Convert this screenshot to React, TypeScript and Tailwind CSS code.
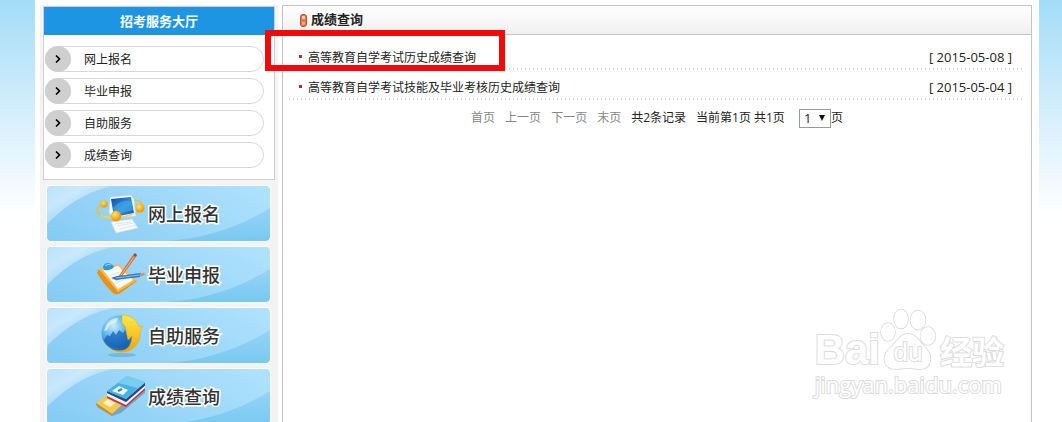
import React from 'react';

const services = ['网上报名', '毕业申报', '自助服务', '成绩查询'];

const records = [
  { title: '高等教育自学考试历史成绩查询', date: '2015-05-08' },
  { title: '高等教育自学考试技能及毕业考核历史成绩查询', date: '2015-05-04' },
];

function ComputerIcon() {
  return (
    <svg viewBox="0 0 50 44" className="h-11 w-[50px]" aria-hidden="true">
      <defs>
        <linearGradient id="screen" x1="0" y1="0" x2="1" y2="1">
          <stop offset="0" stopColor="#0b4fa8" />
          <stop offset="0.55" stopColor="#2b8fe0" />
          <stop offset="1" stopColor="#1556ae" />
        </linearGradient>
        <radialGradient id="ball" cx="0.4" cy="0.35" r="0.7">
          <stop offset="0" stopColor="#ffe27a" />
          <stop offset="0.5" stopColor="#fbb81c" />
          <stop offset="1" stopColor="#e88d05" />
        </radialGradient>
      </defs>
      <path d="M10 11C1 14 0 20 6 23c8 5 33 3 40-7" fill="none" stroke="#f0bd35" strokeWidth="1.6" />
      <path d="M15 5 36 3l3 4 2 17-23 3-4-7z" fill="#f1f6fb" stroke="#b9cfe2" strokeWidth=".6" />
      <path d="M16 7 36 5l3 16-20 4z" fill="url(#screen)" />
      <path d="M18 16c6-7 12-8 18-7l2 9-18 5z" fill="#4fb1ee" opacity=".5" />
      <path d="M16 30 37 27l6 9-22 5z" fill="#f9fbfd" stroke="#c9d9e6" strokeWidth=".6" />
      <path d="m20 32 16-2m-14 4 17-3m-15 6 17-4" stroke="#cfdbe6" strokeWidth=".7" />
      <path d="M6 23c6 4 20 4 32-1" fill="none" stroke="#f7cf57" strokeWidth="1.6" />
      <path d="M39 8c5 0 8 2 7 6" fill="none" stroke="#f0bd35" strokeWidth="1.6" />
      <circle cx="9" cy="12" r="3.6" fill="url(#ball)" />
      <circle cx="21" cy="24" r="5.2" fill="url(#ball)" />
      <circle cx="45" cy="16" r="4.5" fill="url(#ball)" />
    </svg>
  );
}

function ClipboardIcon() {
  return (
    <svg viewBox="0 0 50 44" className="h-11 w-[50px]" aria-hidden="true">
      <path d="m3 17 20-5c3 5 11 12 19 16L24 41c-3 1-5 0-7-2C11 33 6 27 2 20z" fill="#e8921c" />
      <path d="m4 16 19-5 19 16-19 12z" fill="#f7bc51" />
      <path d="m8 17 15-4 15 14-15 9z" fill="#fff" />
      <path d="m14 23 10-4m-7 8 11-5m-7 8 11-5" stroke="#d7dfe8" strokeWidth="1" />
      <path d="M8 14c1-4 5-5 8-3l3 2c0 3-6 5-10 4z" fill="#2c9bd6" />
      <path d="M10 13c2-2 4-2 6-1" stroke="#9adcf5" fill="none" />
      <path d="M38 2 23 24l-2 4 4-2L41 4z" fill="#d9753d" />
      <path d="m39 4-15 21" stroke="#f3b184" strokeWidth="1" />
      <path d="m38 2 3 2 1-2-2-2z" fill="#a1462a" />
      <path d="m16 25 5 2 24-3 1-4-24 3z" fill="#2d79c6" />
      <path d="m21 25 24-3" stroke="#8cc7ef" />
      <path d="m45 22 4-2m-3 3 4-2" stroke="#e28c52" strokeWidth="1.3" />
    </svg>
  );
}

function GlobeIcon() {
  return (
    <svg viewBox="0 0 50 44" className="h-11 w-[50px]" aria-hidden="true">
      <defs>
        <radialGradient id="globe" cx="0.35" cy="0.3" r="0.8">
          <stop offset="0" stopColor="#c5ecfc" />
          <stop offset="0.45" stopColor="#58b2e8" />
          <stop offset="1" stopColor="#0b4fa8" />
        </radialGradient>
        <linearGradient id="ring" x1="0" y1="0" x2="0" y2="1">
          <stop offset="0" stopColor="#ffe94a" />
          <stop offset="1" stopColor="#f3a407" />
        </linearGradient>
      </defs>
      <ellipse cx="27" cy="41" rx="14" ry="2" fill="#5b9dbf" opacity=".5" />
      <path d="M7 22c3 10 10 16 19 16 10 0 17-6 19-17l-4-9-14 21z" fill="url(#ring)" stroke="#e8a80c" strokeWidth=".5" />
      <circle cx="24" cy="19" r="17.5" fill="url(#globe)" />
      <path d="m9 26 3-5 3 1 3-5 3 4 3-5 4 3 3-4 3 3v11c-3 5-8 6-12 5-6 0-11-3-13-8z" fill="#125cb4" opacity=".7" />
      <path d="M12 10c3-4 7-6 11-6l-2 5-6 2-3 5-3 1z" fill="#e4f7fe" opacity=".75" />
      <path d="M27 1c9 0 15 5 17 12l3-1-2 7c0 11-7 19-19 19 7-2 11-8 11-16l-4 4-3-14-3-3z" fill="url(#ring)" stroke="#e8a80c" strokeWidth=".5" />
    </svg>
  );
}

function DisksIcon() {
  return (
    <svg viewBox="0 0 50 44" className="h-11 w-[50px]" aria-hidden="true">
      <path d="m2 29 12-7 18 9 18-17v4L26 38l-9 3L2 32z" fill="#54606f" opacity=".4" />
      <path d="m1 28 12-9 17 8-13 12z" fill="#f7c84c" />
      <path d="m1 28 16 11v2L1 30z" fill="#cb8f22" />
      <path d="m8 28 5-4 7 4-5 4z" fill="#fff2c4" />
      <path d="m12 20 19 9 20-18v3L31 32l-19-9z" fill="#bf3252" />
      <path d="m12 18 19 9 20-18v3L31 30l-19-9z" fill="#eef3f8" />
      <path d="m12 16 19 8 20-17v3L31 27l-19-9z" fill="#234b82" />
      <path d="m12 16 20-15 18 6-19 17z" fill="#4ab2e3" />
      <path d="m23 8 9-7 18 6-7 6z" fill="#79cdf0" />
      <path d="m17 16 7-5 9 4-5 5z" fill="#eaf8fe" />
      <path d="m23 16 4-2" stroke="#487da8" strokeWidth="2" />
    </svg>
  );
}

const banners = [
  { label: '网上报名', Icon: ComputerIcon },
  { label: '毕业申报', Icon: ClipboardIcon },
  { label: '自助服务', Icon: GlobeIcon },
  { label: '成绩查询', Icon: DisksIcon },
];

function Banner({ label, Icon }: { label: string; Icon: () => React.JSX.Element }) {
  return (
    <a
      href="#"
      className="relative flex h-[55px] shrink-0 items-center overflow-hidden rounded-[4px] bg-linear-to-b from-[#a9dcfb] to-[#79c8f0] pl-12 outline-1 outline-white"
    >
      <svg viewBox="0 0 223 55" preserveAspectRatio="none" className="absolute inset-0 h-full w-full" aria-hidden="true">
        <defs>
          <linearGradient id="sheen" x1="0" y1="0" x2="1" y2="0">
            <stop offset="0" stopColor="#8accf5" />
            <stop offset="1" stopColor="#b4e5fd" />
          </linearGradient>
          <linearGradient id="corner" x1="0" y1="0" x2="1" y2="1">
            <stop offset="0" stopColor="#bfe3fc" />
            <stop offset="0.3" stopColor="#d3edfd" />
            <stop offset="0.8" stopColor="#8bcdf5" />
          </linearGradient>
        </defs>
        <path d="M0 55V38C22 16 42 5 66 0h157v22C190 42 158 52 120 55z" fill="url(#sheen)" opacity=".7" />
        <path d="M0 0h66C42 5 22 16 0 38z" fill="url(#corner)" opacity=".8" />
      </svg>
      <span className="relative flex items-center gap-[3px]">
        <Icon />
        <span className="text-[18px] leading-6 font-medium text-[#333] [paint-order:stroke_fill] [-webkit-text-stroke:3px_#fff]">
          {label}
        </span>
      </span>
    </a>
  );
}

function Sidebar() {
  return (
    <aside className="flex w-[238px] shrink-0 flex-col bg-[#f3f3f3] pr-[3px] pl-[3px] pt-px">
      <nav className="shrink-0 border border-[#d0d0d0] bg-white pb-[11px]" aria-label="招考服务大厅">
        <h2 className="h-7 bg-[#1e95e3] text-center text-[13px] leading-7 font-bold text-white">招考服务大厅</h2>
        <ul className="flex flex-col gap-1.5 pt-[11px] pr-2.5 pl-px">
          {services.map((name) => (
            <li key={name}>
              <a href="#" className="flex h-[26px] items-center rounded-full border border-[#d8d8d8] text-[12px] text-[#222]">
                <span className="-my-px -ml-px flex size-[26px] shrink-0 items-center justify-center rounded-full bg-[#cfcfcf]">
                  <svg viewBox="0 0 8 8" className="size-2" aria-hidden="true">
                    <path d="m2 .5 3.5 3.5L2 7.5" fill="none" stroke="#000" strokeWidth="1.6" />
                  </svg>
                </span>
                <span className="pt-0.5 pl-[13px]">{name}</span>
              </a>
            </li>
          ))}
        </ul>
      </nav>
      <div className="flex flex-col gap-1.5 pt-1.5 pr-[5px] pl-1">
        {banners.map((b) => (
          <Banner key={b.label} {...b} />
        ))}
      </div>
    </aside>
  );
}

function Pager() {
  return (
    <div className="flex h-9 items-center justify-center text-[12px] text-[#222]">
      <span className="flex gap-2.5 text-[#888]">
        <span>首页</span>
        <span>上一页</span>
        <span>下一页</span>
        <span>末页</span>
      </span>
      <span className="pl-2.5">共2条记录</span>
      <span className="pl-2.5">当前第1页 共1页</span>
      <span className="relative ml-3.5 flex">
        <select
          id="page"
          aria-label="页码"
          className="h-[19px] w-8 appearance-none border border-[#999] bg-white pl-1 text-[13px] leading-4"
        >
          <option>1</option>
        </select>
        <svg viewBox="0 0 6 6" className="pointer-events-none absolute top-1.5 right-1.5 size-1.5" aria-hidden="true">
          <path d="M0 0h6L3 6z" fill="#111" />
        </svg>
      </span>
      <label htmlFor="page">页</label>
    </div>
  );
}

function Results() {
  return (
    <main className="min-w-0 flex-1 border border-b-0 border-[#c4c4c4] bg-white">
      <h1 className="flex h-[29px] items-center gap-1 border-b border-[#c4c4c4] bg-linear-to-b from-white to-[#f0f0f0] pl-[17px] text-[13px] font-bold text-[#222]">
        <svg viewBox="0 0 7 13" className="h-[13px] w-[7px]" aria-hidden="true">
          <rect x=".5" y=".5" width="6" height="12" rx="2.5" fill="#e57b50" stroke="#b7512c" />
          <rect x="2" y="2" width="3" height="3" rx="1" fill="#f9d2bd" />
          <rect x="2" y="8" width="3" height="3" rx="1" fill="#f7a97e" />
        </svg>
        成绩查询
      </h1>
      <ul className="pt-[5px] pr-2 pl-1.5 text-[12px] text-[#222]">
        {records.map((r) => (
          <li key={r.date}>
            <div className="flex h-7 items-center pt-2 pr-[11px] pl-2.5">
              <span className="mb-1 size-[3px] bg-[#b02a3c]" />
              <a href="#" className="pl-1.5">{r.title}</a>
              <time className="ml-auto text-[13px]">[ {r.date} ]</time>
            </div>
            <div className="h-0.5 bg-[repeating-linear-gradient(90deg,#d4d4d4_0_1px,transparent_1px_4px)]" />
          </li>
        ))}
      </ul>
      <Pager />
    </main>
  );
}

function Watermark() {
  return (
    <div
      aria-hidden="true"
      className="pointer-events-none absolute right-[58px] bottom-6 text-white [paint-order:stroke_fill] [-webkit-text-stroke:2px_#dcdcdc]"
    >
      <div className="flex items-end font-['Liberation_Sans',sans-serif] font-bold">
        <span className="text-[42px] leading-10">Bai</span>
        <span className="relative flex h-[62px] w-[56px] items-end justify-center pb-1">
          <svg viewBox="0 0 56 62" className="absolute inset-0" fill="#fff" stroke="#d6d6d6" strokeWidth="1.4">
            <ellipse cx="8" cy="24" rx="7" ry="9" />
            <ellipse cx="21" cy="11" rx="7" ry="9.5" />
            <ellipse cx="38" cy="12" rx="7.5" ry="9.5" />
            <ellipse cx="48" cy="28" rx="7.5" ry="9" />
            <path d="M28 26c8 0 10 6 16 12 10 9 8 23-4 23-5 0-8-1-12-1s-8 1-12 1C3 61 1 48 10 40c8-7 10-14 18-14z" />
          </svg>
          <span className="relative text-[26px] leading-7 font-normal">du</span>
        </span>
        <span className="pl-1 font-['Noto_Sans_CJK_SC',sans-serif] text-[32px] leading-10">经验</span>
      </div>
      <div className="font-['Open_Sans',sans-serif] text-[22px] leading-7">jingyan.baidu.com</div>
    </div>
  );
}

export default function App() {
  return (
    <div className="relative h-screen overflow-hidden bg-white bg-linear-to-b from-[#a3dcf8] to-white to-[215px] pr-[23px] pl-[35px] font-['Open_Sans','Noto_Sans_CJK_SC',sans-serif]">
      <div className="flex h-full gap-1 bg-white pt-[5px] pr-[7px] pl-[5px]">
        <Sidebar />
        <Results />
      </div>
      <div className="pointer-events-none absolute top-[30px] left-[265px] h-[41px] w-60 border-6 border-[#f00a0a]" />
      <Watermark />
    </div>
  );
}
